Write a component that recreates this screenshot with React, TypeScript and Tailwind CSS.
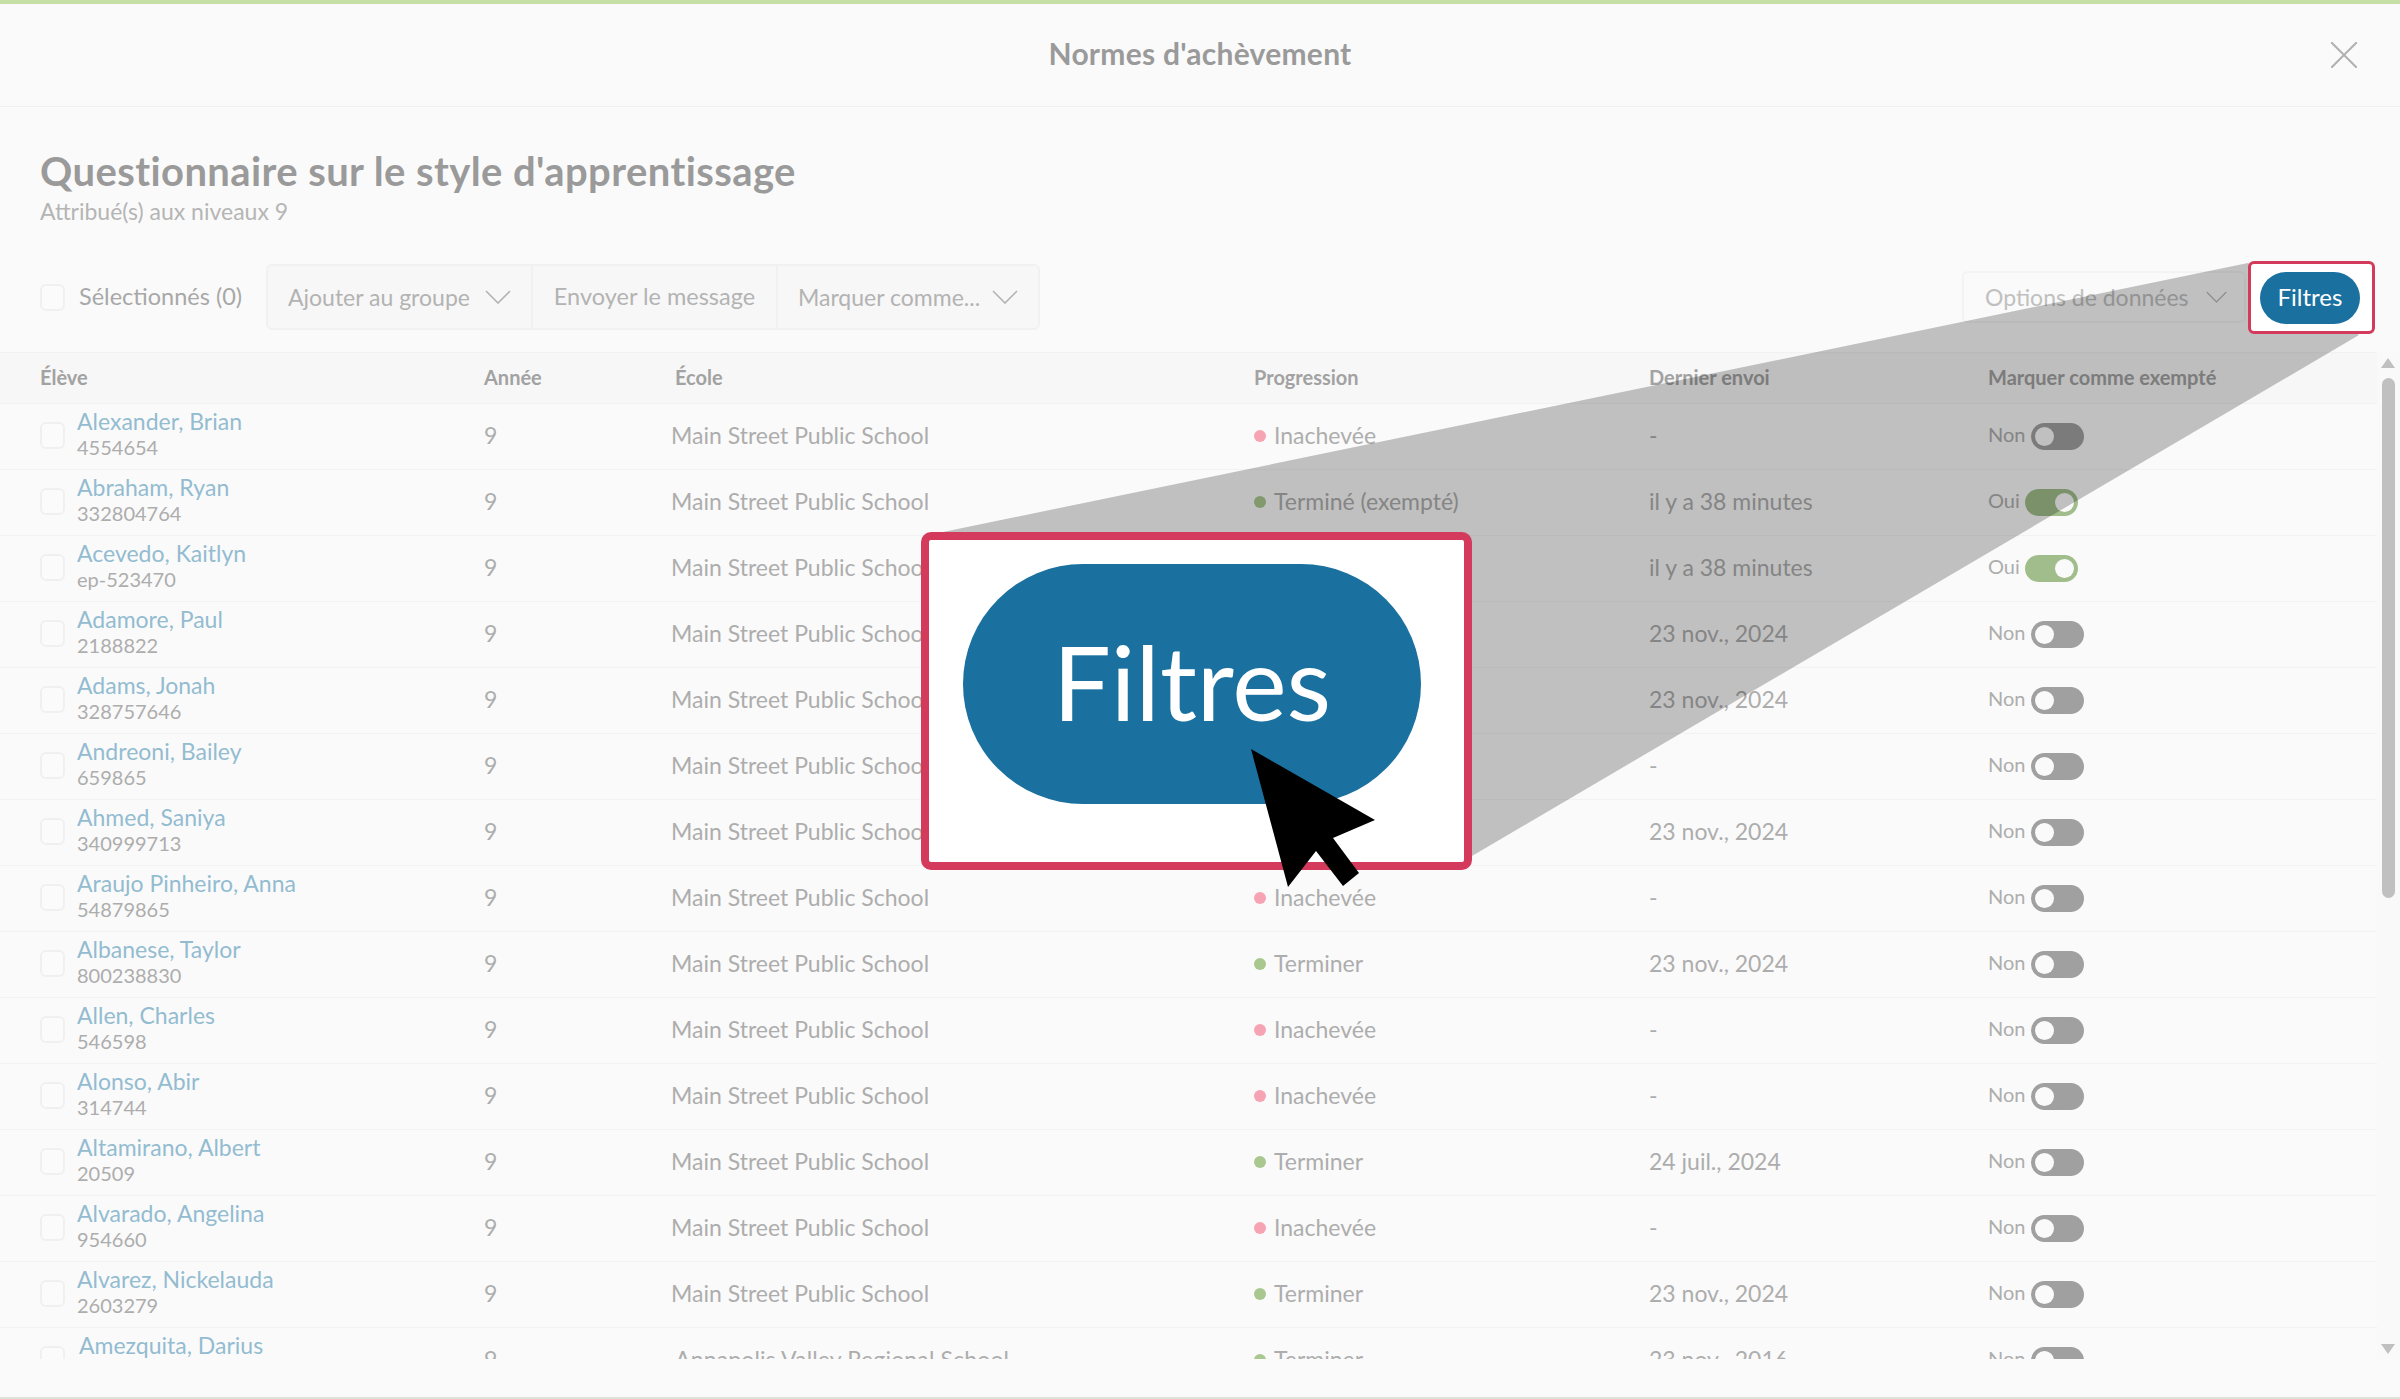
import React from 'react';

interface Student {
  name: string;
  id: string;
  school?: string;
  progress: string;
  lastSent: string;
  exempt?: boolean;
}

const SCHOOL = 'Main Street Public School';

const students: Student[] = [
  { name: 'Alexander, Brian', id: '4554654', progress: 'Inachevée', lastSent: '-' },
  { name: 'Abraham, Ryan', id: '332804764', progress: 'Terminé (exempté)', lastSent: 'il y a 38 minutes', exempt: true },
  { name: 'Acevedo, Kaitlyn', id: 'ep-523470', progress: 'Terminé (exempté)', lastSent: 'il y a 38 minutes', exempt: true },
  { name: 'Adamore, Paul', id: '2188822', progress: 'Terminer', lastSent: '23 nov., 2024' },
  { name: 'Adams, Jonah', id: '328757646', progress: 'Terminer', lastSent: '23 nov., 2024' },
  { name: 'Andreoni, Bailey', id: '659865', progress: 'Inachevée', lastSent: '-' },
  { name: 'Ahmed, Saniya', id: '340999713', progress: 'Terminer', lastSent: '23 nov., 2024' },
  { name: 'Araujo Pinheiro, Anna', id: '54879865', progress: 'Inachevée', lastSent: '-' },
  { name: 'Albanese, Taylor', id: '800238830', progress: 'Terminer', lastSent: '23 nov., 2024' },
  { name: 'Allen, Charles', id: '546598', progress: 'Inachevée', lastSent: '-' },
  { name: 'Alonso, Abir', id: '314744', progress: 'Inachevée', lastSent: '-' },
  { name: 'Altamirano, Albert', id: '20509', progress: 'Terminer', lastSent: '24 juil., 2024' },
  { name: 'Alvarado, Angelina', id: '954660', progress: 'Inachevée', lastSent: '-' },
  { name: 'Alvarez, Nickelauda', id: '2603279', progress: 'Terminer', lastSent: '23 nov., 2024' },
  { name: 'Amezquita, Darius', id: '1120456', school: 'Annapolis Valley Regional School', progress: 'Terminer', lastSent: '23 nov., 2016' },
];

function Chevron({ className }: { className: string }) {
  return (
    <svg className={className} viewBox="0 0 26 14" fill="none" stroke="#b3b3b3" strokeWidth="1.6">
      <polyline points="1,1 13,13 25,1" />
    </svg>
  );
}

function Checkbox() {
  return <div className="w-[25px] h-[27px] shrink-0 rounded-[6px] border-2 border-[#f0f0f0] bg-[#fbfbfb]" />;
}

function Toggle({ on }: { on?: boolean }) {
  return (
    <div className={`w-[53px] h-[27px] translate-y-[1px] rounded-full p-[4px] flex ${on ? 'bg-[#a0bd8b] justify-end' : 'bg-[#a0a0a0] justify-start'}`}>
      <div className="w-[19px] h-[19px] rounded-full bg-[#fafafa]" />
    </div>
  );
}

function Row({ student, index }: { student: Student; index: number }) {
  const done = student.progress !== 'Inachevée';
  const last = index === students.length - 1;
  return (
    <div className="grid grid-cols-[444px_187px_583px_395px_339px_1fr] h-[66px] pl-10 pb-[2px] items-center border-b border-[#f2f2f2] text-[#adadad] text-[23px] shrink-0">
      <div className="flex items-center gap-[12px]">
        <Checkbox />
        <div className={`flex flex-col mb-[3px] ${last ? 'ml-[2px]' : ''}`}>
          <span className="text-[#93bcd1] text-[23px] leading-[26px]">{student.name}</span>
          <span className="text-[#adadad] text-[20px] leading-[26px]">{student.id}</span>
        </div>
      </div>
      <div>9</div>
      <div className={last ? 'ml-[4px] tracking-[0.15px]' : ''}>{student.school ?? SCHOOL}</div>
      <div className="flex items-center gap-[8px]">
        <span className={`w-[12px] h-[12px] rounded-full ${done ? 'bg-[#a9c88f]' : 'bg-[#f6a3b3]'}`} />
        <span>{student.progress}</span>
      </div>
      <div>{student.lastSent}</div>
      <div className="flex items-center">
        <span className={`text-[20px] mb-[3px] ${student.exempt ? 'w-[37px]' : 'w-[43px]'}`}>{student.exempt ? 'Oui' : 'Non'}</span>
        <Toggle on={student.exempt} />
      </div>
    </div>
  );
}

export default function App() {
  return (
    <div className="relative w-[2400px] h-[1399px] overflow-hidden bg-[#fafafa] font-['Lato',sans-serif] flex flex-col">
      <div className="h-[4px] bg-[#c6dfa6] shrink-0" />

      <header className="relative h-[103px] shrink-0 border-b border-[#f0f0f0] flex items-center justify-center">
        <h1 className="text-[30px] tracking-[0.25px] font-bold text-[#9a9a9a] mb-[3px]">Normes d'achèvement</h1>
        <svg className="absolute right-[43px] top-[38px] w-[26px] h-[26px]" viewBox="0 0 26 26" stroke="#b0b0b0" strokeWidth="2">
          <line x1="0" y1="0" x2="26" y2="26" />
          <line x1="26" y1="0" x2="0" y2="26" />
        </svg>
      </header>

      <div className="pl-10 pt-[41px] shrink-0">
        <h2 className="text-[40px] tracking-[0.4px] leading-[46px] font-bold text-[#9a9a9a]">Questionnaire sur le style d'apprentissage</h2>
        <p className="text-[23px] leading-[28px] mt-[3px] text-[#b5b5b5]">Attribué(s) aux niveaux 9</p>
      </div>

      <div className="flex items-center h-[66px] mt-[39px] pl-10 pr-[25px] shrink-0 text-[23px] text-[#b3b3b3]">
        <Checkbox />
        <span className="ml-[14px] w-[187px] text-[23.5px] text-[#a8a8a8]">Sélectionnés (0)</span>
        <div className="flex h-[66px] w-[774px] rounded-[6px] border-2 border-[#f1f1f1] bg-[#f7f7f7]">
          <div className="w-[265px] px-[20px] flex items-center justify-between border-r-2 border-[#f1f1f1]">
            <span>Ajouter au groupe</span>
            <Chevron className="w-[26px] h-[14px]" />
          </div>
          <div className="w-[245px] flex items-center justify-center border-r-2 border-[#f1f1f1] text-[23.5px]">Envoyer le message</div>
          <div className="flex-1 px-[20px] flex items-center justify-between">
            <span>Marquer comme...</span>
            <Chevron className="w-[26px] h-[14px]" />
          </div>
        </div>
        <div className="ml-auto flex items-center gap-[17px] w-[284px] h-[52px] rounded-[6px] border-2 border-[#f3f3f3] pl-[21px] text-[#c0c0c0] mr-[129px]">
          <span>Options de données</span>
          <Chevron className="w-[21px] h-[12px]" />
        </div>
      </div>

      <div className="flex h-[1007px] mt-[22px] overflow-hidden shrink-0">
        <div className="w-[2377px] flex flex-col overflow-hidden">
          <div className="grid grid-cols-[444px_187px_583px_395px_339px_1fr] h-[52px] pl-10 pb-[3px] items-center bg-[#f7f7f7] border-y border-[#f1f1f1] text-[20px] font-bold text-[#a2a2a2] shrink-0">
            <div>Élève</div>
            <div>Année</div>
            <div className="pl-1">École</div>
            <div>Progression</div>
            <div>Dernier envoi</div>
            <div>Marquer comme exempté</div>
          </div>
          {students.map((s, i) => (
            <Row key={s.name} student={s} index={i} />
          ))}
        </div>
        <div className="relative w-[23px] bg-[#f9f9f9]">
          <div className="absolute left-[4px] top-[6px] w-0 h-0 border-x-[7px] border-x-transparent border-b-[10px] border-b-[#c0c0c0]" />
          <div className="absolute left-[5px] top-[26px] bottom-[461px] w-[13px] rounded-full bg-[#c0c0c0]" />
          <div className="absolute left-[4px] bottom-[5px] w-0 h-0 border-x-[7px] border-x-transparent border-t-[10px] border-t-[#c0c0c0]" />
        </div>
      </div>

      <div className="absolute bottom-0 inset-x-0 h-[2px] bg-[#dfe3d6]" />

      {/* zoom annotation above the page */}
      <svg className="absolute inset-0 w-[2400px] h-[1399px] pointer-events-none" viewBox="0 0 2400 1399">
        <polygon points="943,532 2248,263 2359,335 1472,856" fill="#000000" fillOpacity="0.23" />
      </svg>

      <div className="absolute left-[2248px] top-[261px] w-[127px] h-[73px] rounded-[6px] border-[3px] border-[#d33a5c] bg-white flex items-center pl-[9px]">
        <div className="w-[100px] h-[52px] pb-[2px] rounded-full bg-[#1a709f] text-white text-[24px] flex items-center justify-center">Filtres</div>
      </div>

      <div className="absolute left-[921px] top-[532px] w-[551px] h-[338px] rounded-[10px] border-[8px] border-[#d33a5c] bg-white">
        <div className="absolute left-[34px] top-[24px] w-[458px] h-[240px] pb-[6px] rounded-[120px] bg-[#1a709f] text-white text-[103px] font-normal flex items-center justify-center">Filtres</div>
      </div>

      <svg className="absolute inset-0 w-[2400px] h-[1399px] pointer-events-none" viewBox="0 0 2400 1399">
        <polygon points="1251,749 1375,820 1333,838 1359,873 1343,886 1316,851 1288,887" fill="#000000" />
      </svg>
    </div>
  );
}
